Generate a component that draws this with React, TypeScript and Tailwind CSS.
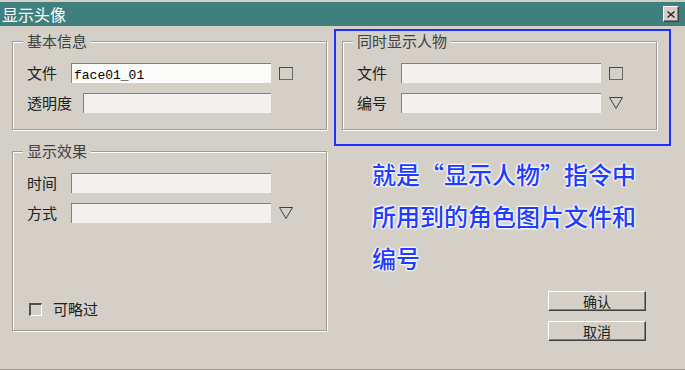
import type { ReactNode } from "react";

const ui = { fontFamily: '"Noto Sans CJK SC", "Noto Sans", sans-serif' };

function Group({ title, className, children }: { title: string; className?: string; children: ReactNode }) {
  return (
    <div
      className={`relative w-[315px] border border-[#a09c94] shadow-[inset_1px_1px_0_#fff,1px_1px_0_#fff] ${className ?? ""}`}
    >
      <span className="absolute -top-[10px] left-[10px] bg-[#d4d0c8] px-[4px] text-[15px] leading-[18px] text-[#404040]">
        {title}
      </span>
      {children}
    </div>
  );
}

function Field({ value, light }: { value?: string; light?: boolean }) {
  return (
    <div
      className={`h-[20px] border-t border-l border-[#808080] pl-[2px] text-[13px] leading-[19px] text-black ${
        light ? "bg-[#fbfbfa]" : "bg-[#f2f1ee]"
      }`}
    >
      <span style={{ fontFamily: '"Liberation Mono", monospace' }}>{value}</span>
    </div>
  );
}

function Square() {
  return <div className="ml-[8px] h-[13px] w-[14px] border border-[#4a4a4a] border-r-[#6a6a6a] border-b-[#6a6a6a]" />;
}

function Triangle() {
  return (
    <svg className="ml-[8px]" width="14" height="12" viewBox="0 0 14 12">
      <polygon points="0.5,0.5 13.5,0.5 7,11.5" fill="none" stroke="#404040" strokeWidth="1" />
    </svg>
  );
}

function Row({ label, labelW, inputW, children }: { label: string; labelW: string; inputW: string; children: ReactNode }) {
  return (
    <div className="flex h-[20px] items-center">
      <div className={`${labelW} text-[15px] leading-[20px] text-[#202020]`}>{label}</div>
      <div className={inputW}>{children}</div>
    </div>
  );
}

function Button({ label }: { label: string }) {
  return (
    <button className="h-[20px] w-[98px] border border-t-white border-l-white border-r-[#404040] border-b-[#404040] bg-[#d4d0c8] text-[14px] leading-[16px] text-[#202020] shadow-[inset_-1px_-1px_0_#808080]">
      {label}
    </button>
  );
}

export default function App() {
  return (
    <div className="flex h-[370px] w-[685px] flex-col bg-[#d4d0c8]" style={ui}>
      <div className="mt-[2px] flex h-[24px] items-center justify-between bg-[#3f7f7d] pl-[2px] pr-[6px]">
        <span className="text-[16px] leading-[20px] text-white">显示头像</span>
        <div className="flex h-[16px] w-[16px] items-center justify-center border border-t-white border-l-white border-r-[#404040] border-b-[#404040] bg-[#d4d0c8] shadow-[inset_-1px_-1px_0_#808080]">
          <svg width="8" height="7" viewBox="0 0 8 7">
            <path d="M0.5 0.5 L7.5 6.5 M7.5 0.5 L0.5 6.5" stroke="#202020" strokeWidth="1.3" />
          </svg>
        </div>
      </div>

      <div className="flex flex-1 border-b border-[#a09c94] pl-[12px]">
        <div className="flex flex-col pt-[15px]">
          <Group title="基本信息" className="h-[89px] pl-[14px] pt-[21px]">
            <div className="flex flex-col gap-[10px]">
              <div className="flex items-center">
                <Row label="文件" labelW="w-[44px]" inputW="w-[200px]">
                  <Field value="face01_01" light />
                </Row>
                <Square />
              </div>
              <Row label="透明度" labelW="w-[56px]" inputW="w-[188px]">
                <Field />
              </Row>
            </div>
          </Group>

          <Group title="显示效果" className="mt-[21px] flex h-[180px] flex-col pl-[14px] pt-[21px]">
            <div className="flex flex-col gap-[10px]">
              <Row label="时间" labelW="w-[44px]" inputW="w-[200px]">
                <Field />
              </Row>
              <div className="flex items-center">
                <Row label="方式" labelW="w-[44px]" inputW="w-[200px]">
                  <Field />
                </Row>
                <Triangle />
              </div>
            </div>
            <div className="mt-auto mb-[12px] ml-[2px] flex items-center gap-[11px]">
              <div className="h-[13px] w-[13px] border-t-2 border-l-2 border-r border-b border-t-[#505050] border-l-[#505050] border-r-white border-b-white" />
              <span className="text-[15px] leading-[18px] text-[#202020]">可略过</span>
            </div>
          </Group>
        </div>

        <div className="ml-[7px] flex flex-col pt-[3px]">
          <div className="h-[117px] w-[337px] border-2 border-[#1f2fff] pl-[6px] pt-[10px]">
            <Group title="同时显示人物" className="h-[89px] pl-[14px] pt-[21px]">
              <div className="flex flex-col gap-[10px]">
                <div className="flex items-center">
                  <Row label="文件" labelW="w-[44px]" inputW="w-[200px]">
                    <Field />
                  </Row>
                  <Square />
                </div>
                <div className="flex items-center">
                  <Row label="编号" labelW="w-[44px]" inputW="w-[200px]">
                    <Field />
                  </Row>
                  <Triangle />
                </div>
              </div>
            </Group>
          </div>

          <div className="mt-[7px] pl-[38px] text-[24px] leading-[42px] font-medium text-[#1f3cff] [text-shadow:0_0_2px_#fff,0_0_2px_#fff,0_0_2px_#fff,0_0_3px_#fff,0_0_3px_#fff]">
            <div>就是“显示人物”指令中</div>
            <div>所用到的角色图片文件和</div>
            <div>编号</div>
          </div>

          <div className="mt-[12px] flex flex-col gap-[10px] pl-[214px]">
            <Button label="确认" />
            <Button label="取消" />
          </div>
        </div>
      </div>
    </div>
  );
}
